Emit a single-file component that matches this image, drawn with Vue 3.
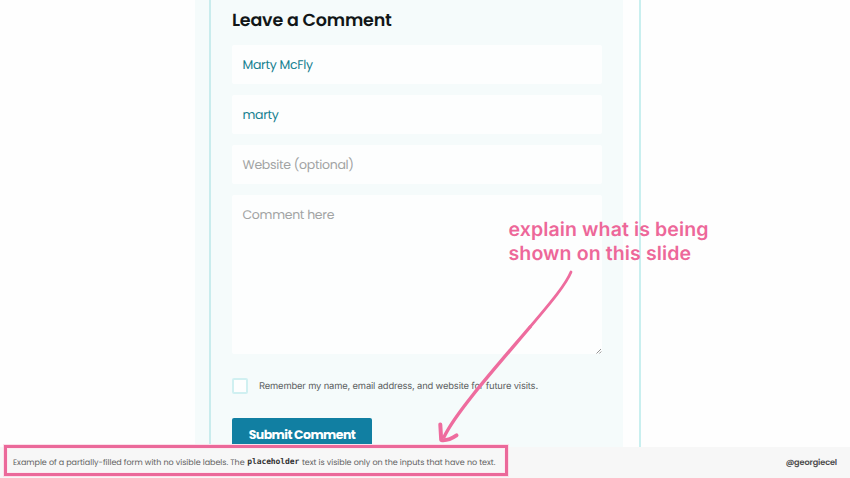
<template>
  <div class="slide">
    <main class="slide-content">
      <div class="page">
        <div class="gutter"></div>
        <form class="comment-form" @submit.prevent>
          <h1>Leave a Comment</h1>
          <div class="field name">{{ name }}</div>
          <div class="field email">{{ email }}</div>
          <div class="field website placeholder">Website (optional)</div>
          <div class="field comment placeholder">
            <span>Comment here</span>
            <svg class="resizer" width="6" height="6" viewBox="0 0 6 6">
              <path d="M0.5 5.5L5 1M3.3 5.5L5.3 3.5" />
            </svg>
          </div>
          <label class="remember">
            <span class="checkbox"></span>
            <span class="remember-text">Remember my name, email address, and website for future visits.</span>
          </label>
          <button class="submit"><span>Submit Comment</span></button>
        </form>
      </div>
    </main>

    <footer class="slide-footer">
      <p class="caption">
        <span class="caption-start">Example of a partially-filled form with no visible labels. The</span>
        <code>placeholder</code>
        <span class="caption-end">text is visible only on the inputs that have no text.</span>
      </p>
      <span class="handle">@georgiecel</span>
    </footer>

    <div class="highlight"></div>
    <p class="note">
      <span class="note-first">explain what is being</span><br />
      <span class="note-second">shown on this slide</span>
    </p>
    <svg class="arrow" width="850" height="478" viewBox="0 0 850 478">
      <path class="arrow-tail" d="M571 272C566 284 553 300 530 327" />
      <path class="arrow-line" d="M530 327C496 367 456 412 444 437" />
      <path class="arrow-head" d="M440.3 424.5L441.2 440Q448 441 456.5 435.3" />
    </svg>
  </div>
</template>

<script setup>
import { ref } from 'vue'

const name = ref('Marty McFly')
const email = ref('marty')
</script>

<style>
body {
  margin: 0;
}
</style>

<style scoped>
.slide {
  position: relative;
  display: flex;
  flex-direction: column;
  width: 850px;
  height: 478px;
  overflow: hidden;
  background: #fefefe;
  font-family: Poppins, Inter, sans-serif;
  text-rendering: geometricPrecision;
}

.slide-content {
  height: 447px;
  overflow: hidden;
}

.page {
  display: flex;
  box-sizing: border-box;
  width: 446px;
  height: 100%;
  margin-left: 195px;
  border-right: 2px solid #c9efef;
}

.gutter {
  width: 14px;
  background: #f5fbfb;
}

.comment-form {
  box-sizing: border-box;
  width: 414px;
  padding: 8px 21px 0;
  border-left: 2px solid #c9eced;
  background: #f5fbfb;
}

h1 {
  height: 26px;
  margin: 0 0 11px;
  font-size: 17.5px;
  font-weight: 600;
  line-height: 26px;
  letter-spacing: -0.2px;
  color: #111617;
  white-space: nowrap;
}

.field {
  box-sizing: border-box;
  width: 370px;
  height: 39px;
  margin-bottom: 10.9px;
  padding-left: 10.5px;
  border-radius: 2px;
  background: #fdfefe;
  font-size: 12.5px;
  line-height: 41px;
  letter-spacing: -0.3px;
  color: #158090;
  white-space: nowrap;
}

.field.placeholder {
  color: #a1a3a3;
}

.field.comment {
  position: relative;
  height: 159px;
  margin-bottom: 24.3px;
}

.resizer {
  position: absolute;
  right: 0;
  bottom: 0;
  fill: none;
  stroke: #777;
  stroke-width: 0.8;
}

.remember {
  display: flex;
  align-items: center;
  height: 16px;
}

.checkbox {
  box-sizing: border-box;
  width: 16px;
  height: 16px;
  margin-right: 11px;
  border: 2px solid #d0f0f1;
  border-radius: 2px;
  background: #fdfefe;
}

.remember-text {
  padding-top: 1px;
  font-family: Inter, sans-serif;
  font-size: 9.4px;
  letter-spacing: -0.16px;
  color: #5c6061;
  white-space: nowrap;
}

.submit {
  display: block;
  width: 140px;
  height: 34px;
  margin-top: 24px;
  padding: 0;
  border: 0;
  border-radius: 2px;
  background: #117fa2;
  color: #fff;
  font-family: inherit;
  font-size: 12.5px;
  font-weight: 700;
  line-height: 35.5px;
  letter-spacing: -0.55px;
  white-space: nowrap;
  text-rendering: inherit;
}

.slide-footer {
  display: flex;
  align-items: center;
  justify-content: space-between;
  box-sizing: border-box;
  height: 31px;
  padding: 0 13px;
  background: #f7f7f7;
  color: #626262;
  font-size: 8px;
}

.caption {
  display: flex;
  gap: 2.6px;
  margin: 0;
  letter-spacing: -0.02px;
  white-space: nowrap;
}

code {
  color: #333;
  font-family: 'DejaVu Sans Mono', monospace;
  font-size: 8px;
  font-weight: 700;
  letter-spacing: -0.08px;
}

.handle {
  color: #4c4c4c;
  font-size: 8.2px;
  font-weight: 600;
  letter-spacing: -0.14px;
}

.highlight {
  position: absolute;
  top: 445px;
  left: 4px;
  box-sizing: border-box;
  width: 504px;
  height: 31px;
  border: 3px solid #eb699a;
  box-shadow: 0 0 0 1px #fcdfe9, inset 0 0 0 1px #fcebf1;
}

.note {
  position: absolute;
  top: 216.5px;
  left: 508.5px;
  margin: 0;
  color: #ed6799;
  font-family: Inter, sans-serif;
  font-size: 19.5px;
  font-weight: 600;
  line-height: 24.5px;
  letter-spacing: 0.12px;
  white-space: nowrap;
}

.arrow {
  position: absolute;
  top: 0;
  left: 0;
  fill: none;
  stroke: #ee6c9e;
  stroke-linecap: round;
  stroke-linejoin: round;
}

.arrow-tail {
  stroke-width: 2.8;
}

.arrow-line {
  stroke-width: 3.4;
}

.arrow-head {
  stroke-width: 4;
}
</style>
